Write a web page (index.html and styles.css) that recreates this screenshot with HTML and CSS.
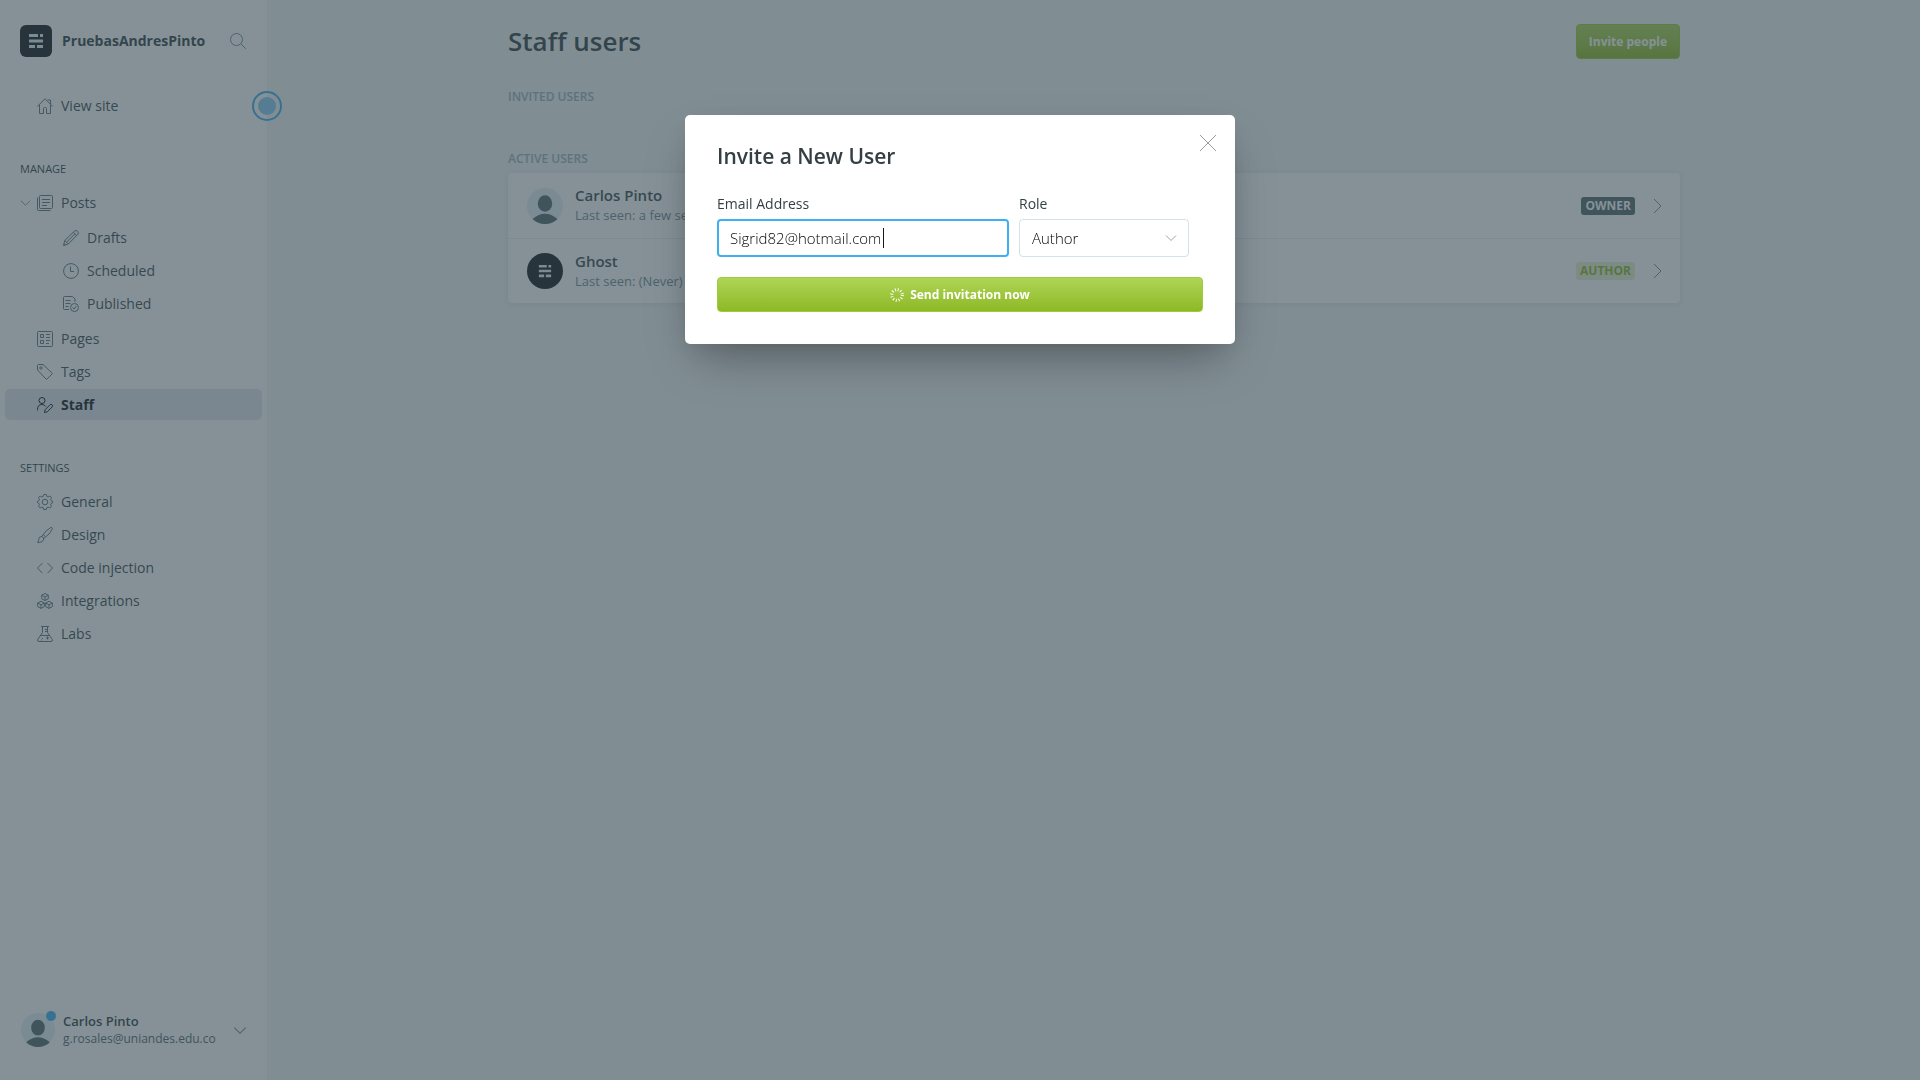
FILE: index.html
```
<!DOCTYPE html>
<html lang="en">
<head>
<meta charset="utf-8">
<title>Staff users</title>
<link rel="stylesheet" href="styles.css">
</head>
<body>
<svg class="sprite" aria-hidden="true">
  <symbol id="logo" viewBox="0 0 16 16"><path fill="currentColor" d="M1 1h9v3H1zM12 1h3v3h-3zM1 6.500h14v3H1zM1 12h6v3H1zM9 12h6v3H9z"/></symbol>
  <symbol id="avatar" viewBox="0 0 36 36"><circle class="avatar-bg" cx="18" cy="18" r="18"/><ellipse class="avatar-fg" cx="18" cy="15.500" rx="7.200" ry="8.300"/><path class="avatar-fg" d="M5.500 31Q18 20.500 30.500 31A18 18 0 0 1 5.500 31z"/></symbol>
  <symbol id="chevron" viewBox="0 0 12 8"><path d="M1 1.500l5 5 5-5"/></symbol>
</svg>

<div class="app">
  <aside class="sidebar">
    <header class="brand">
      <span class="brand-logo"><svg class="mark"><use href="#logo"/></svg></span>
      <strong class="brand-name">PruebasAndresPinto</strong>
      <button class="icon-button" aria-label="Search"><svg class="icon" viewBox="0 0 16 16"><circle cx="6.500" cy="6.500" r="6"/><path d="M10.800 10.800l5 5"/></svg></button>
    </header>

    <nav class="nav">
      <ul class="nav-list nav-site">
        <li><a class="nav-link" href="#"><svg class="icon" viewBox="0 0 16 16"><path d="M.3 8.500L8 .8l7.700 7.700M10.500 2h3v4M2.500 7v8.500h4V10.500q0-1 1-1h1q1 0 1 1v5h4V7"/></svg>View site</a></li>
      </ul>

      <h2 class="nav-title">Manage</h2>
      <ul class="nav-list">
        <li><a class="nav-link" href="#"><svg class="nav-chevron"><use href="#chevron"/></svg><svg class="icon" viewBox="0 0 16 16"><rect x="2.500" y=".5" width="13" height="13" rx="1"/><path d="M.5 2.500v12q0 1 1 1h12M5 4.500h8M5 7.500h8M5 10.500h5"/></svg>Posts</a>
          <ul class="nav-sub">
            <li><a class="nav-link" href="#"><svg class="icon" viewBox="0 0 16 16"><path d="M.5 15.500l1.300-5L11.500 1q1.500-1.200 3 .3t.3 3L5.300 14zM1.800 10.500l3.500 3.500M10.300 2.200l3.500 3.500M3.600 12.200l8.400-8.400M.8 13.800l1.500 1.300"/></svg>Drafts</a></li>
            <li><a class="nav-link" href="#"><svg class="icon" viewBox="0 0 16 16"><circle cx="8" cy="8" r="7.400"/><path d="M7.500 3.500v5H11"/></svg>Scheduled</a></li>
            <li><a class="nav-link" href="#"><svg class="icon" viewBox="0 0 16 16"><path d="M6 13.500H1.500q-1 0-1-1v-11q0-1 1-1h8l2.500 2.500v3M2.500 4.500h5M2.500 7.500h5M2.500 10.500h3"/><circle cx="11.500" cy="11.500" r="4"/><path d="M9.700 11.500l1.300 1.500 2.400-3"/></svg>Published</a></li>
          </ul>
        </li>
        <li><a class="nav-link" href="#"><svg class="icon" viewBox="0 0 16 16"><rect x=".5" y=".5" width="15" height="15" rx="1"/><path d="M3.500 3.500h3v3h-3zM3.500 9.500h3v3h-3zM9 3.500h4M9 6.500h4M9 9.500h4M9 12.500h3"/></svg>Pages</a></li>
        <li><a class="nav-link" href="#"><svg class="icon" viewBox="0 0 16 16"><path d="M.5 1.500q0-1 1-1H6l9.500 9-6 6L.5 6z"/><circle cx="4" cy="4" r="1.200"/></svg>Tags</a></li>
        <li><a class="nav-link nav-link-active" href="#" aria-current="page"><svg class="icon" viewBox="0 0 16 16"><circle cx="5" cy="3.500" r="3"/><path d="M.5 13.500v-1q0-5 4.500-5 2.500 0 3.600 2M7.500 15.500l.6-2.800 5-5q1-.8 2 .1t.2 2l-5 5z"/></svg>Staff</a></li>
      </ul>

      <h2 class="nav-title">Settings</h2>
      <ul class="nav-list">
        <li><a class="nav-link" href="#"><svg class="icon" viewBox="0 0 16 16"><circle cx="8" cy="8" r="2.800"/><path d="M6.700.5h2.600l.5 1.900 1.300.6 1.800-1 1.600 1.600-.9 1.800.5 1.300 1.500.6v1.400l-1.500.6-.5 1.300.9 1.800-1.600 1.600-1.800-.9-1.300.5-.5 1.900H6.700l-.5-1.900-1.300-.5-1.800.9-1.600-1.600.9-1.800-.5-1.300-1.400-.6V7.300l1.400-.6.5-1.300-.9-1.800L3.100 2l1.800 1 1.300-.6z"/></svg>General</a></li>
        <li><a class="nav-link" href="#"><svg class="icon" viewBox="0 0 16 16"><path d="M.5 15.500q1-1 1.200-3.200.4-2.800 2.800-2.800 2.200.3 2.200 2.600Q6.200 15.500.5 15.500zM4.800 9.500q4-6.500 9-9 1.500-.3 1.700 1Q13 7.500 6.700 11.500M6.300 7.600l2 2"/></svg>Design</a></li>
        <li><a class="nav-link" href="#"><svg class="icon" viewBox="0 0 16 16"><path d="M5.500 3L.5 8l5 5.200M10.500 3l5 5-5 5.200"/></svg>Code injection</a></li>
        <li><a class="nav-link" href="#"><svg class="icon" viewBox="0 0 16 16"><path d="M8 .5l3.300 1.700v3.600L8 7.500 4.700 5.800V2.200zM4.700 2.200L8 4l3.300-1.800M8 4v3.500M4 8.300l3.300 1.700v3.600L4 15.400.7 13.600V10zM.7 10L4 11.800 7.300 10M4 11.800v3.600M12 8.300l3.300 1.700v3.600L12 15.400l-3.300-1.800V10zM8.700 10l3.300 1.800 3.300-1.800M12 11.800v3.600"/></svg>Integrations</a></li>
        <li><a class="nav-link" href="#"><svg class="icon" viewBox="0 0 16 16"><path d="M4 .5h8M5.500.5v6L.7 13.500q-.7 2 1.300 2h12q2 0 1.300-2L10.500 6.500v-6M3 9.500h10M8 3.500h2.500M8 5.500h2.500M10.500 10.500v3M9 12h3M5 12.500h1M4 14h1"/></svg>Labs</a></li>
      </ul>
    </nav>

    <footer class="account">
      <span class="account-avatar"><svg class="avatar avatar-small"><use href="#avatar"/></svg><span class="badge"></span></span>
      <span class="person">
        <strong class="account-name">Carlos Pinto</strong>
        <span class="account-mail">g.rosales@uniandes.edu.co</span>
      </span>
      <button class="icon-button" aria-label="Account menu"><svg class="account-chevron"><use href="#chevron"/></svg></button>
    </footer>
    <span class="beacon"></span>
  </aside>

  <main class="main">
    <div class="content">
      <header class="page-header">
        <h1 class="page-title">Staff users</h1>
        <button class="button">Invite people</button>
      </header>

      <section class="group group-invited">
        <h2 class="group-title">Invited users</h2>
      </section>

      <section class="group">
        <h2 class="group-title">Active users</h2>
        <ul class="users">
          <li class="user">
            <svg class="avatar"><use href="#avatar"/></svg>
            <span class="person"><strong class="user-name">Carlos Pinto</strong><span class="user-seen">Last seen: a few se</span></span>
            <span class="role role-owner">Owner</span>
            <svg class="user-arrow" viewBox="0 0 9 14"><path d="M1 0l7 7-7 7"/></svg>
          </li>
          <li class="user">
            <span class="avatar avatar-ghost"><svg class="mark"><use href="#logo"/></svg></span>
            <span class="person"><strong class="user-name">Ghost</strong><span class="user-seen">Last seen: (Never)</span></span>
            <span class="role role-author">Author</span>
            <svg class="user-arrow" viewBox="0 0 9 14"><path d="M1 0l7 7-7 7"/></svg>
          </li>
        </ul>
      </section>
    </div>
  </main>
</div>

<div class="overlay">
  <form class="modal" role="dialog" aria-labelledby="invite-title">
    <h2 class="modal-title" id="invite-title">Invite a New User</h2>
    <button class="close" type="button" aria-label="Close"><svg viewBox="0 0 16 16"><path d="M0 0l16 16M16 0L0 16"/></svg></button>
    <div class="fields">
      <div class="field field-email">
        <label class="label" for="email">Email Address</label>
        <div class="control"><input class="input input-focus" id="email" type="email" value="Sigrid82@hotmail.com"><span class="caret"></span></div>
      </div>
      <div class="field field-role">
        <label class="label" for="role">Role</label>
        <div class="control"><select class="input" id="role"><option>Author</option></select><svg class="select-chevron"><use href="#chevron"/></svg></div>
      </div>
    </div>
    <button class="button button-wide" type="button">
      <svg class="spinner" viewBox="0 0 14 14"><circle cx="7" cy="7" r="5.300"/></svg>Send invitation now
    </button>
  </form>
</div>
</body>
</html>
```
FILE: styles.css
```
* { box-sizing: border-box; }

body {
  margin: 0;
  font-family: "Open Sans", "Noto Sans", sans-serif;
  font-size: 14px;
  line-height: 20px;
  color: #343f44;
  background: #f2f4f5;
}

h1, h2, ul { margin: 0; padding: 0; }
ul { list-style: none; }
svg { flex: none; fill: none; stroke: currentColor; }
button { font: inherit; cursor: pointer; }

.sprite { position: absolute; width: 0; height: 0; }
.icon { width: 16px; height: 16px; overflow: visible; }
.mark { width: 16px; height: 16px; stroke: none; }
.icon-button { display: flex; padding: 0; border: 0; background: none; color: #738a94; }

.app { display: flex; min-height: 100vh; }

/* Sidebar */
.sidebar {
  position: relative;
  display: flex;
  flex: none;
  flex-direction: column;
  width: 268px;
  border-right: 1px solid #f0f3f6;
  background: #fff;
}
.brand { display: flex; align-items: center; padding: 25px 21px 0 20px; }
.brand-logo {
  display: flex;
  align-items: center;
  justify-content: center;
  width: 32px;
  height: 32px;
  border-radius: 6px;
  background: #15171a;
  color: #e5eff5;
}
.brand-name { flex: 1; margin-left: 10px; font-size: 14px; font-weight: 700; }

.nav { flex: 1; padding: 33px 5px 0; }
.nav-title {
  padding: 0 15px;
  margin: 38px 0 8px;
  font-size: 11px;
  font-weight: 400;
  text-transform: uppercase;
}
.nav-link {
  position: relative;
  display: flex;
  align-items: center;
  gap: 8px;
  height: 31px;
  margin-bottom: 2px;
  padding-left: 32px;
  border-radius: 5px;
  color: #3d4a50;
  text-decoration: none;
}
.nav-link .icon { color: #5f737b; }
.nav-sub { padding: 2px 0; }
.nav-sub .nav-link { padding-left: 58px; }
.nav-link-active { background: #e3e7ef; color: #15171a; font-weight: 700; }
.nav-link-active .icon { color: #15171a; }
.nav-chevron { position: absolute; left: 15px; width: 11px; height: 8px; color: #738a94; }

.account { display: flex; align-items: center; padding: 0 20px 32px 21px; }
.account .person { margin-left: 8px; }
.account-avatar { position: relative; display: flex; }
.account-name { font-size: 13px; font-weight: 600; line-height: 18px; }
.account-mail { font-size: 12px; line-height: 18px; color: #54666d; }
.account-chevron { width: 14px; height: 9px; }
.badge {
  position: absolute;
  top: -3px;
  right: -2px;
  width: 12px;
  height: 12px;
  border: 1px solid #fff;
  border-radius: 50%;
  background: #3eb0ef;
}
.beacon {
  position: absolute;
  top: 91px;
  right: -15px;
  width: 30px;
  height: 30px;
  padding: 4px;
  border: 2px solid #3eb0ef;
  border-radius: 50%;
  background: #86ccf4 content-box;
}

.person { display: flex; flex: 1; flex-direction: column; }
.avatar { width: 36px; height: 36px; stroke: none; }
.avatar-small { width: 34px; height: 34px; }
.avatar-bg { fill: #e5eff5; }
.avatar-fg { fill: #54666d; }
.avatar-ghost {
  display: flex;
  align-items: center;
  justify-content: center;
  border-radius: 50%;
  background: #15171a;
  color: #e5eff5;
}
.avatar-ghost .mark { width: 14px; height: 14px; }

/* Staff list */
.main { flex: 1; padding: 24px 40px; }
.content { max-width: 1172px; margin: 0 auto; }
.page-header { display: flex; align-items: center; justify-content: space-between; }
.page-title { font-size: 26px; font-weight: 600; line-height: 35px; }

.button {
  display: flex;
  align-items: center;
  justify-content: center;
  gap: 6px;
  height: 35px;
  padding: 0 12px;
  border: 1px solid #9fcb3b;
  border-radius: 4px;
  background: linear-gradient(#aed556, #8eb926);
  color: #fff;
  font-size: 12px;
  font-weight: 700;
}
.group { margin-top: 28px; }
.group-invited { margin-bottom: 42px; }
.group-title {
  font-size: 12px;
  font-weight: 600;
  line-height: 20px;
  text-transform: uppercase;
  color: #9bb2bd;
}
.users {
  margin-top: 4px;
  border-radius: 4px;
  background: #fff;
  box-shadow: 0 1px 6px rgba(0, 0, 0, .08);
}
.user { display: flex; align-items: center; height: 65px; padding: 0 18px 0 19px; }
.user + .user { border-top: 1px solid #e5eff5; }
.user .person { margin-left: 12px; }
.user-name { font-size: 15px; font-weight: 600; line-height: 20px; color: #3d4a50; }
.user-seen { font-size: 13px; line-height: 21px; color: #738a94; }
.role {
  padding: 0 4px;
  border-radius: 3px;
  font-size: 12px;
  font-weight: 700;
  line-height: 18px;
  text-transform: uppercase;
}
.role-owner { background: #54666d; color: #fff; }
.role-author { background: #e9f2d3; color: #8eb926; }
.user-arrow { width: 9px; height: 14px; margin-left: 18px; color: #738a94; }

/* Invite dialog */
.overlay {
  position: fixed;
  inset: 0;
  padding-top: 115px;
  background: rgba(51, 72, 82, .6);
}
.modal {
  position: relative;
  width: 550px;
  margin: 0 auto;
  padding: 28px 32px 32px;
  border-radius: 5px;
  background: #fff;
  box-shadow: 0 22px 45px -12px rgba(0, 0, 0, .35), 0 6px 20px rgba(0, 0, 0, .05);
}
.modal-title { margin-bottom: 25px; font-size: 21px; font-weight: 600; line-height: 26px; }
.close {
  position: absolute;
  top: 20px;
  right: 19px;
  display: flex;
  padding: 0;
  border: 0;
  background: none;
  color: #808284;
}
.close svg { width: 16px; height: 16px; stroke-width: .8; }
.fields { display: flex; gap: 10px; margin-bottom: 20px; }
.field-email { flex: 1; }
.field-role { width: 170px; margin-right: 14px; }
.label { display: block; margin-bottom: 5px; }
.control { position: relative; }
.input {
  display: block;
  width: 100%;
  height: 38px;
  padding: 0 12px;
  border: 1px solid #d2e2ea;
  border-radius: 4px;
  outline: 0;
  appearance: none;
  background: #fff;
  color: #050607;
  font: inherit;
  font-size: 15px;
  font-weight: 300;
}
.input-focus { padding: 0 11px; border: 2px solid #3eb0ef; }
.caret { position: absolute; top: 9px; left: 166px; width: 1px; height: 20px; background: #15171a; }
.select-chevron { position: absolute; top: 15px; right: 12px; width: 12px; height: 8px; color: #94a6b0; }
.button-wide { width: 100%; }
.spinner { width: 14px; height: 14px; stroke-width: 3; stroke-dasharray: 1 1.780; }
```
